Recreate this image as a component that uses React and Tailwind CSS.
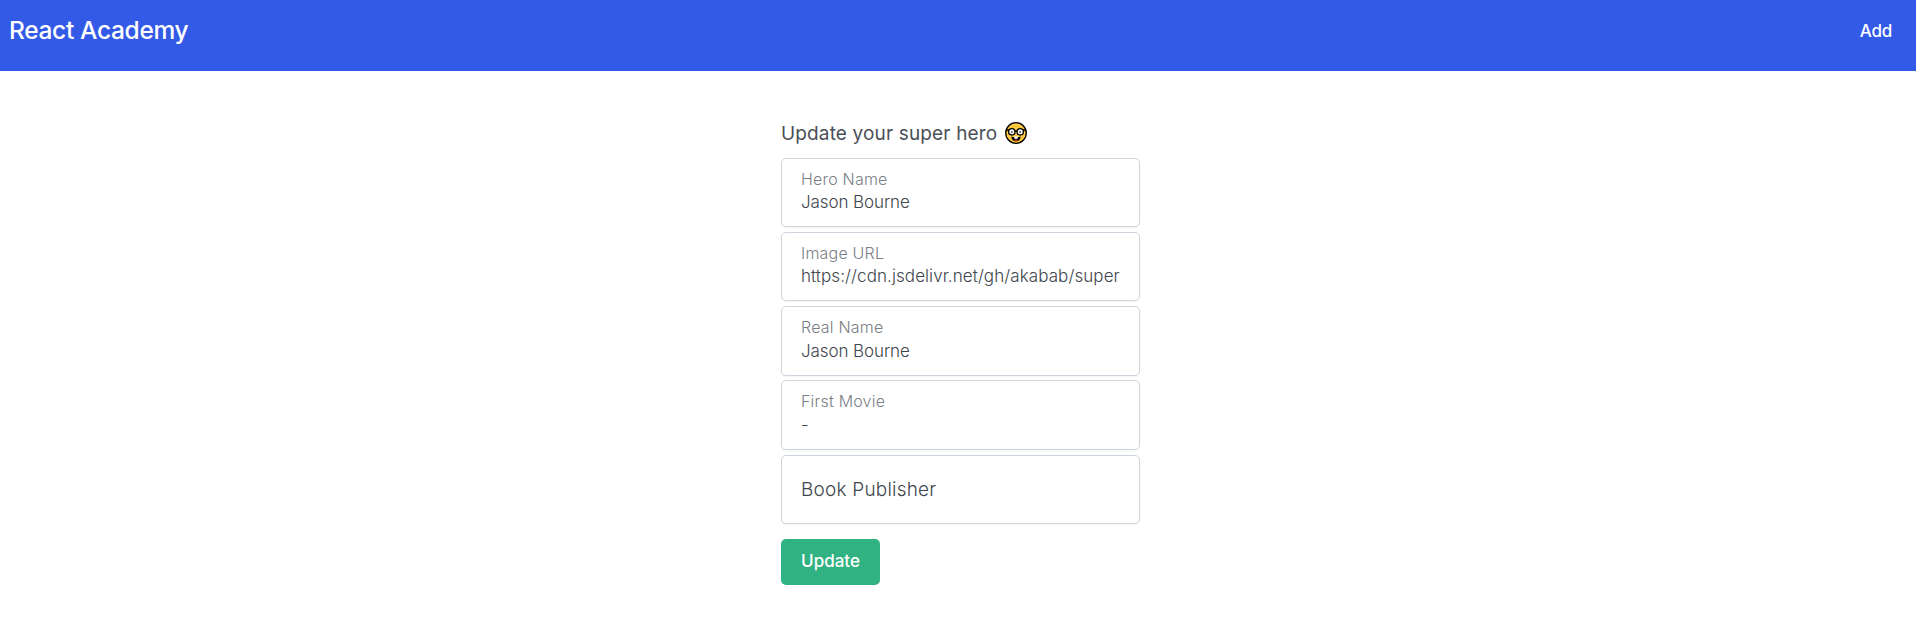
const fields = [
  { label: "Hero Name", value: "Jason Bourne" },
  { label: "Image URL", value: "https://cdn.jsdelivr.net/gh/akabab/super", wide: true },
  { label: "Real Name", value: "Jason Bourne" },
  { label: "First Movie", value: "-" },
];

function NerdFace() {
  return (
    <svg viewBox="0 0 22 22" className="block h-[22px] w-[22px] shrink-0" aria-hidden="true">
      <circle cx="11" cy="11" r="10.3" fill="#ffc83d" stroke="#000" strokeWidth="1.3" />
      <path d="M1 8h3M18 8h3M10 9h2" stroke="#000" strokeWidth="1.6" />
      <circle cx="6.8" cy="9.8" r="3.2" fill="#fff" stroke="#000" strokeWidth="1.3" />
      <circle cx="15.2" cy="9.8" r="3.2" fill="#fff" stroke="#000" strokeWidth="1.3" />
      <circle cx="6.900" cy="9.900" r="1" fill="#555" />
      <circle cx="15.100" cy="9.900" r="1" fill="#555" />
      <path d="M6.300 14.500c1.600 1 7.800 1 9.400 0-.2 3.200-2 4.900-4.700 4.900s-4.500-1.700-4.700-4.900z" fill="#000" />
      <path d="M9.300 14.300h3.400v2.500H9.300z" fill="#fff" />
      <path d="M8.800 18.200q2.200-1.200 4.400 0-2.200 1.600-4.400 0z" fill="#e8413c" />
    </svg>
  );
}

export default function App() {
  return (
    <div className="min-h-[618px] bg-white font-['Inter',sans-serif] text-[#40464e]">
      <header className="flex h-[71px] items-start justify-between bg-[#335ae7] pr-[24px] pl-[9px] text-white">
        <span className="mt-[15px] text-[24.500px] leading-[31px] font-medium tracking-[-0.330px]">React Academy</span>
        <a className="mt-[19px] text-[17px] leading-[24px] font-medium tracking-[-0.200px]">Add</a>
      </header>
      <main className="ml-[781px] w-[359px] pt-[48px]">
        <h1 className="mb-[9.800px] flex h-[29px] items-start gap-[8px] text-[19px] tracking-[0.150px] text-[#4a4f57]">
          <span className="pt-[1px] leading-[27px] whitespace-nowrap">Update your super hero</span>
          <span className="mt-[3px]">
            <NerdFace />
          </span>
        </h1>
        <form className="flex flex-col items-start">
          <div className="flex w-full flex-col gap-[4.800px]">
            {fields.map((f) => (
              <label
                key={f.label}
                className="flex h-[69.400px] flex-col rounded-[5px] border border-[#ced4de] px-[19px] pt-[9px] shadow-[0_1px_2px_rgba(0,0,0,0.05)]"
              >
                <span className="text-[16px] leading-[22px] font-light tracking-[0.200px] text-[#7b8085]">{f.label}</span>
                <span
                  className={`mt-[0.450px] text-[17px] leading-[24px] font-light whitespace-nowrap ${f.wide ? "tracking-[0.080px]" : "tracking-[-0.090px]"}`}
                >
                  {f.value}
                </span>
              </label>
            ))}
            <div className="flex h-[69.400px] items-center rounded-[5px] border border-[#ced4de] px-[19px] pt-[2px] text-[19px] font-light tracking-[0.200px] shadow-[0_1px_2px_rgba(0,0,0,0.05)]">
              Book Publisher
            </div>
          </div>
          <button type="button" className="mt-[15px] h-[46px] w-[99px] rounded-[5px] bg-[#30b283] text-[17px] font-medium text-white">
            Update
          </button>
        </form>
      </main>
    </div>
  );
}
